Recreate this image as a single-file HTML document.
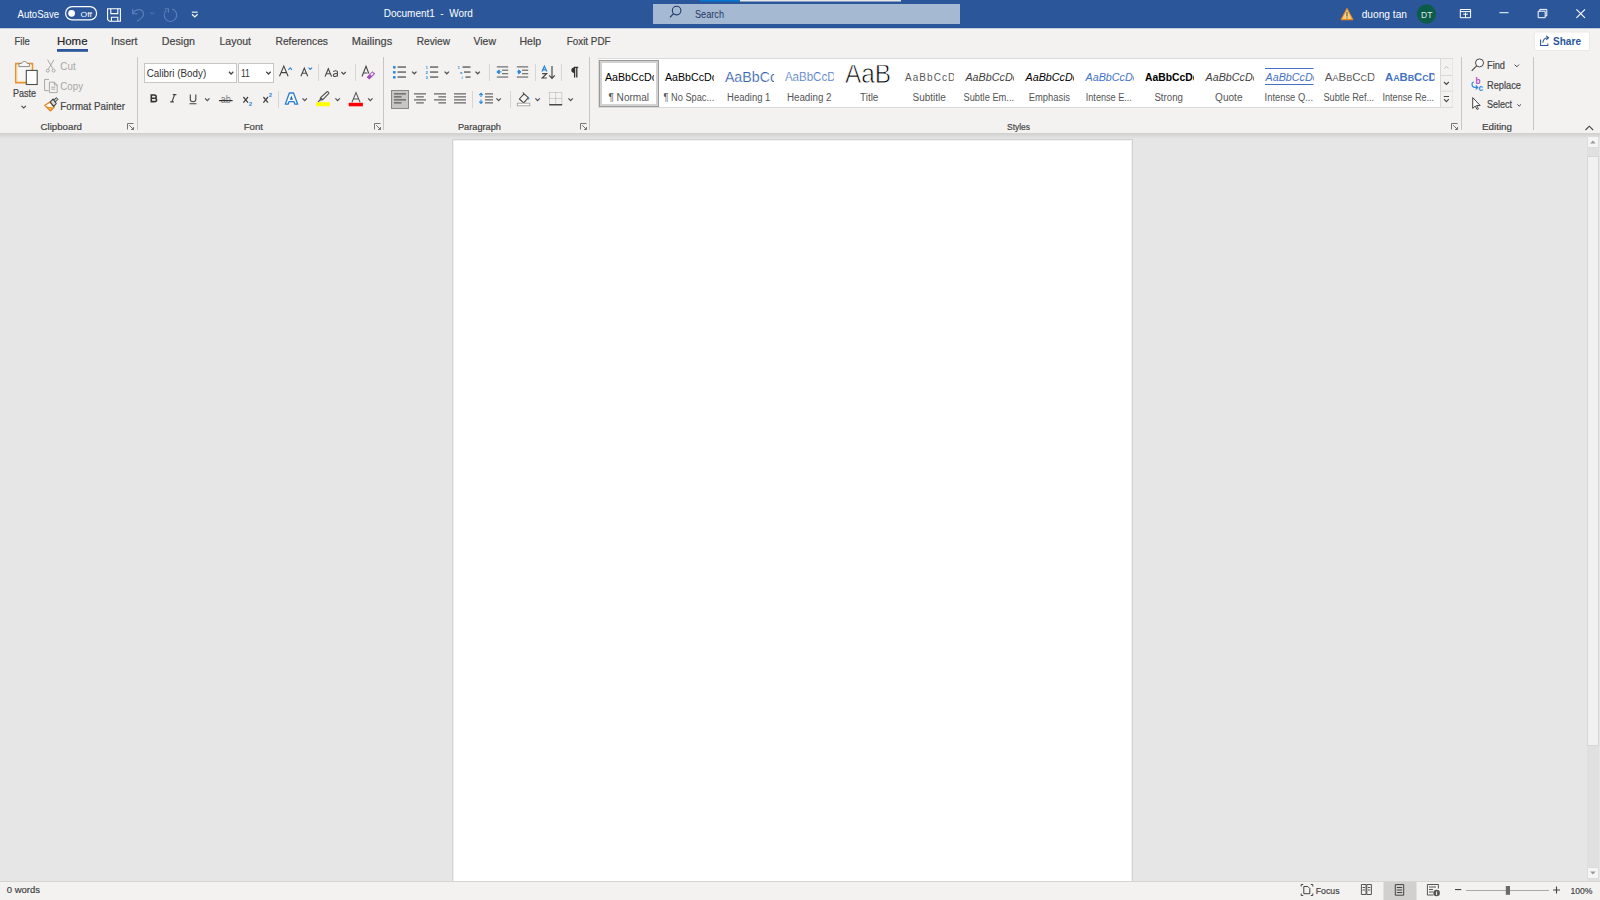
<!DOCTYPE html>
<html><head><meta charset="utf-8">
<style>
*{margin:0;padding:0}
html,body{width:1600px;height:900px;overflow:hidden;background:#e6e6e6}
svg{position:absolute;left:0;top:0}
text{font-family:"Liberation Sans",sans-serif;white-space:pre}
</style></head><body>
<svg width="1600" height="900" viewBox="0 0 1600 900">

<rect x="0" y="0" width="1600" height="28" fill="#2b579a"/>
<rect x="0" y="27" width="1600" height="1" fill="#25519a"/>
<rect x="700" y="0" width="40" height="1.5" fill="#0078d4"/>
<rect x="740" y="0" width="161" height="1.5" fill="#e6e6e6"/>
<rect x="653" y="4" width="307" height="20" fill="#a6b9d3"/>
<rect x="0" y="28" width="1600" height="105" fill="#f3f2f1"/>
<defs><linearGradient id="sh" x1="0" y1="0" x2="0" y2="1"><stop offset="0" stop-color="#d0cfce"/><stop offset="1" stop-color="#e6e6e6"/></linearGradient></defs>
<rect x="0" y="133" width="1600" height="6" fill="url(#sh)"/>
<rect x="452.5" y="139.5" width="680" height="745" fill="#fff" stroke="#d2d2d2" stroke-width="1"/>
<rect x="453.5" y="140.5" width="678" height="745" fill="none" stroke="#f0f0f0" stroke-width="1"/>
<rect x="0" y="881" width="1600" height="19" fill="#f3f2f1"/>
<rect x="0" y="881" width="1600" height="1" fill="#d6d5d4"/>

<!-- toggle -->
<rect x="65.6" y="6.6" width="31" height="13.3" rx="6.65" fill="none" stroke="#fff" stroke-width="1.2"/>
<circle cx="71.6" cy="13.3" r="3.4" fill="#fff"/>
<!-- save -->
<path d="M107.6 8.7h12.8v12.6h-11l-1.8-1.8z" fill="none" stroke="#fff" stroke-width="1.1"/>
<path d="M110.8 8.7v4.9h7v-4.9 M111.4 21.3v-4h6.4v4" fill="none" stroke="#fff" stroke-width="1.1"/>
<!-- undo -->
<path d="M133 13.5 C135 9 141.5 8 143.3 12.5 C144.5 15.5 141 19 137 21.2" fill="none" stroke="#5c80b8" stroke-width="1.1"/>
<path d="M132.6 8.8v4.9h4.9" fill="none" stroke="#5c80b8" stroke-width="1.1"/>
<path d="M150.2 12.2l2 2l2-2" fill="none" stroke="#5c80b8" stroke-width="0.9"/>
<!-- redo -->
<path d="M166.3 10.4 A6.3 6.3 0 1 0 172 9" fill="none" stroke="#5c80b8" stroke-width="1.1"/>
<path d="M164.8 8.8h3.6v3.6" fill="none" stroke="#5c80b8" stroke-width="1.1"/>
<!-- customize -->
<rect x="191.8" y="11.6" width="5.8" height="1.1" fill="#fff"/>
<path d="M192 14.3l2.8 2.6l2.8-2.6" fill="none" stroke="#fff" stroke-width="1.2"/>
<!-- search icon -->
<circle cx="676.6" cy="10.6" r="4.3" fill="none" stroke="#1f3763" stroke-width="1.1"/>
<path d="M673.5 13.7L670 17.3" stroke="#1f3763" stroke-width="1.2"/>
<!-- warning -->
<defs><linearGradient id="wg" x1="0" y1="0" x2="0" y2="1"><stop offset="0" stop-color="#fbe3a6"/><stop offset="1" stop-color="#f4c870"/></linearGradient></defs>
<path d="M1347 8.4L1352.8 19.6H1341.2z" fill="url(#wg)" stroke="#e8861a" stroke-width="1.1" stroke-linejoin="round"/>
<path d="M1347 11.8v4.6" stroke="#6a5a40" stroke-width="1.2"/>
<circle cx="1347" cy="17.9" r="0.6" fill="#6a5a40"/>
<!-- avatar -->
<circle cx="1426.5" cy="14" r="9.7" fill="#0c5c4a"/>
<!-- ribbon display -->
<path d="M1460.3 9.5h10.3v8.2h-10.3z M1460.3 11.6h10.3 M1465.5 12.6v4.6 M1463.2 14.2h4.6" fill="none" stroke="#fff" stroke-width="1"/>
<!-- minimize -->
<rect x="1499.5" y="12.2" width="9" height="1" fill="#fff"/>
<!-- restore -->
<path d="M1538.2 11.2h7v6.5h-7z M1539.8 11.2v-1.8h7v6.5h-1.6" fill="none" stroke="#fff" stroke-width="1"/>
<!-- close -->
<path d="M1576.4 9.4l8.6 8.4 M1585 9.4l-8.6 8.4" fill="none" stroke="#fff" stroke-width="1.1"/>

<!-- tab row top line -->
<rect x="0" y="28" width="1600" height="1" fill="#c6cfdc"/>
<!-- Home underline -->
<rect x="57" y="49" width="31" height="2.8" fill="#2b579a"/>
<!-- share btn -->
<rect x="1534.5" y="32" width="55" height="18.5" fill="#fff" stroke="#e6e4e2" stroke-width="0.8" rx="1.5"/>
<path d="M1540.6 39.5v5.9h7.2v-2 M1542.8 42.6c0.3-3 2.5-4.8 5.8-4.8 M1546.2 35.8l2.4 2l-2.4 2.1" fill="none" stroke="#2b579a" stroke-width="1.05"/>

<!-- ============ RIBBON ICONS ============ -->
<!-- group separators -->
<rect x="137" y="57" width="1" height="73" fill="#c8c6c4"/>
<rect x="383" y="57" width="1" height="73" fill="#c8c6c4"/>
<rect x="589" y="57" width="1" height="73" fill="#c8c6c4"/>
<rect x="1461" y="57" width="1" height="73" fill="#c8c6c4"/>
<rect x="1533" y="57" width="1" height="73" fill="#c8c6c4"/>

<!-- paste -->
<defs><linearGradient id="pg" x1="0" y1="0" x2="1" y2="0"><stop offset="0" stop-color="#fff6d8"/><stop offset="1" stop-color="#f6f6f6"/></linearGradient></defs>
<path d="M15.8 63.6h16.6v19h-16.6z" fill="#f7f7f7" stroke="#e8912d" stroke-width="1.6"/>
<path d="M17.1 64.9h14v16.4h-14z" fill="none" stroke="#fbe2a4" stroke-width="1"/>
<path d="M18.9 66.6v-3.2h2.8c0.6-2.6 4.8-2.6 5.4 0h2.3v3.2z" fill="#f6f6f6" stroke="#8a8a8a" stroke-width="1"/>
<rect x="26.3" y="70.4" width="10.9" height="14.1" fill="#fff" stroke="#4d4d4d" stroke-width="1.1"/>
<path d="M21.5 105.9l2.2 2.1l2.2-2.1" fill="none" stroke="#505050" stroke-width="1.25"/>
<!-- cut -->
<path d="M47.6 59.8l5.4 9 M53.9 59.8l-5.4 9" fill="none" stroke="#a8a8a8" stroke-width="1"/>
<circle cx="47.8" cy="70.6" r="1.5" fill="none" stroke="#a8a8a8" stroke-width="1"/>
<circle cx="53.6" cy="70.6" r="1.5" fill="none" stroke="#a8a8a8" stroke-width="1"/>
<!-- copy -->
<path d="M49 79.4h-4.4v11.2h4" fill="none" stroke="#a8a8a8" stroke-width="1"/>
<path d="M49.4 82.2h5l2.8 2.8v7.6h-7.8z M54.4 82.2v2.8h2.8 M51.4 87.2h3.8 M51.4 89.2h3.8" fill="none" stroke="#a8a8a8" stroke-width="1"/>
<!-- format painter -->
<path d="M44.8 105.2L50 102.1L54.2 107.2L50.2 110.9z" fill="#fff" stroke="#e8821e" stroke-width="1.3" stroke-linejoin="round"/>
<path d="M46 106.4L53.3 107.6L50.3 110.2z" fill="#ec8a22"/>
<circle cx="50.2" cy="108.6" r="1" fill="#f6c860"/>
<path d="M50.2 101.8L53.2 99L56.2 103.6L53.6 106.4z" fill="#dedede" stroke="#444" stroke-width="1.1" stroke-linejoin="round"/>
<path d="M53.8 100L56.4 97.6L57.9 99.4L55.4 102z" fill="#bbb" stroke="#444" stroke-width="1" stroke-linejoin="round"/>
<!-- font combo boxes -->
<rect x="144.5" y="63.5" width="92" height="19" fill="#fff" stroke="#c8c6c4" stroke-width="1"/>
<rect x="238.5" y="63.5" width="35" height="19" fill="#fff" stroke="#c8c6c4" stroke-width="1"/>
<path d="M228.9 71.8l2.2 2.2l2.2-2.2 M266.3 71.8l2.2 2.2l2.2-2.2" fill="none" stroke="#444" stroke-width="1.25"/>
<!-- grow / shrink font -->
<path d="M279.5 76.3l4.3-10.2l4.3 10.2 M281.2 72.6h5.2" fill="none" stroke="#444" stroke-width="1.1"/>
<path d="M288.4 69.8l1.8-2l1.8 2" fill="none" stroke="#2b88d8" stroke-width="1.1"/>
<path d="M300.9 76.3l3.4-8.2l3.4 8.2 M302.2 73.3h4.2" fill="none" stroke="#444" stroke-width="1.1"/>
<path d="M308.5 67.6l1.8 1.8l1.8-1.8" fill="none" stroke="#2b88d8" stroke-width="1.1"/>
<rect x="318" y="64" width="1" height="17" fill="#d8d6d4"/>
<!-- change case Aa -->
<path d="M325 76.6l3.3-7.9l3.3 7.9 M326.2 73.8h4.2" fill="none" stroke="#444" stroke-width="1.1"/>
<path d="M337.6 71.8c-0.4-1.5-3.8-1.5-4.2 0 M337.4 71.3v5.3 M337.4 73.8c-1.9-0.6-4.1 0-4.1 1.5c0 1.7 3.2 1.5 4.1 0" fill="none" stroke="#444" stroke-width="1.05"/>
<path d="M341.4 72l2.2 2.2l2.2-2.2" fill="none" stroke="#505050" stroke-width="1.25"/>
<rect x="355" y="64" width="1" height="17" fill="#d8d6d4"/>
<!-- clear formatting -->
<path d="M362 76.5l4-10.3l2.9 7.4" fill="none" stroke="#444" stroke-width="1.1"/>
<path d="M363.5 73h4" fill="none" stroke="#444" stroke-width="1"/>
<path d="M366.6 77.2L372.4 71.2L375.2 73.8L369.4 79.6z" fill="#a64dbf"/>
<path d="M370.4 74.6L372.4 72.6L373.6 73.8L371.6 75.8z" fill="#fff"/>


<!-- bold italic underline ... -->
<path d="M151.3 95h3c2.5 0 2.5 3.1 0.3 3.2c2.7 0 2.7 3.4-0.2 3.4h-3.1z M151.3 98.2h3.2" fill="none" stroke="#333" stroke-width="1.6"/>
<path d="M172.8 94.6h3.6 M170.2 101.9h3.6 M174.6 94.6l-2.6 7.3" fill="none" stroke="#444" stroke-width="1.15"/>
<path d="M190.3 94.5v4.8c0 3.3 5.5 3.3 5.5 0v-4.8 M189.5 103.7h7" fill="none" stroke="#444" stroke-width="1.1"/>
<path d="M205.1 98.4l2.2 2.2l2.2-2.2" fill="none" stroke="#505050" stroke-width="1.25"/>

<text x="220.7" y="103.3" font-size="10.8" fill="#7a7a7a" font-family="Liberation Sans" textLength="10" lengthAdjust="spacingAndGlyphs">ab</text>
<path d="M243.4 97l4.6 5.6 M248 97l-4.6 5.6" fill="none" stroke="#444" stroke-width="1.25"/>
<text x="248.7" y="105.8" font-size="6" fill="#2b88d8" font-family="Liberation Sans" font-weight="bold">2</text>
<path d="M263.4 97l4.6 5.6 M268 97l-4.6 5.6" fill="none" stroke="#444" stroke-width="1.25"/>
<text x="268.7" y="96.6" font-size="6" fill="#2b88d8" font-family="Liberation Sans" font-weight="bold">2</text>
<rect x="278" y="91" width="1" height="17" fill="#d8d6d4"/>
<path d="M219 100.6h13.6" stroke="#333" stroke-width="1.2"/>
<!-- text effects -->
<path d="M289.3 93h4.2l4.2 11.2h-2.8l-0.9-2.6h-5l-0.9 2.6h-2.8z" fill="#f4f8fc" stroke="#2b7cd3" stroke-width="1.3" stroke-linejoin="round"/>
<path d="M289.9 99.8h3l-1.5-4.2z" fill="#1f5fa8"/>
<path d="M302.5 98.4l2.2 2.2l2.2-2.2" fill="none" stroke="#505050" stroke-width="1.25"/>
<!-- highlighter -->
<path d="M320 100.2l0.6-2.6l6.2-5.6c0.9-0.8 2.6 0.6 1.8 1.6l-5.8 6z M320.6 97.6l2.2 2 M320 100.2l-2 1.6" fill="#f6f6f6" stroke="#555" stroke-width="1.2" stroke-linejoin="round"/>
<rect x="316.2" y="102.2" width="13.8" height="4" fill="#ffff00"/>
<path d="M335.4 98.4l2.2 2.2l2.2-2.2" fill="none" stroke="#505050" stroke-width="1.25"/>
<!-- font color -->
<path d="M351.9 102.4l4.1-9.8l4.1 9.8 M353.4 99h5.2" fill="none" stroke="#555" stroke-width="1.05"/>
<rect x="348.7" y="102.8" width="14.2" height="3.5" fill="#ff0000"/>
<path d="M368.1 98.4l2.2 2.2l2.2-2.2" fill="none" stroke="#505050" stroke-width="1.25"/>
<!-- dialog launchers -->
<g fill="none" stroke="#666" stroke-width="0.9">
<path d="M127.5 129.5v-6h6 M129.2 125.2l4.3 4.3 M133.5 127v2.5h-2.5"/>
<path d="M374.5 129.5v-6h6 M376.2 125.2l4.3 4.3 M380.5 127v2.5h-2.5"/>
<path d="M580.5 129.5v-6h6 M582.2 125.2l4.3 4.3 M586.5 127v2.5h-2.5"/>
<path d="M1451.5 129.5v-6h6 M1453.2 125.2l4.3 4.3 M1457.5 127v2.5h-2.5"/>
</g>

<!-- bullets -->
<g fill="#2b88d8">
<rect x="393" y="66.1" width="2.6" height="2.4"/><rect x="393" y="71.1" width="2.6" height="2.4"/><rect x="393" y="76.1" width="2.6" height="2.4"/>
</g>
<g fill="#555"><rect x="397.5" y="66.4" width="8.5" height="1.3"/><rect x="397.5" y="71.4" width="8.5" height="1.3"/><rect x="397.5" y="76.4" width="8.5" height="1.3"/></g>
<path d="M412.1 71.6l2.2 2.2l2.2-2.2" fill="none" stroke="#505050" stroke-width="1.3"/>
<g font-family="Liberation Sans" font-size="4.2" fill="#2b88d8" font-weight="bold"><text x="425.5" y="69.2">1</text><text x="425.5" y="74.2">2</text><text x="425.5" y="79.2">3</text></g>
<g fill="#555"><rect x="430" y="66.4" width="8.2" height="1.3"/><rect x="430" y="71.4" width="8.2" height="1.3"/><rect x="430" y="76.4" width="8.2" height="1.3"/></g>
<path d="M444.6 71.6l2.2 2.2l2.2-2.2" fill="none" stroke="#505050" stroke-width="1.3"/>
<g font-family="Liberation Sans" font-size="4.2" fill="#2b88d8" font-weight="bold"><text x="457.6" y="69.2">1</text><text x="460" y="74.2">a</text><text x="461.4" y="79.2">i</text></g>
<g fill="#555"><rect x="462.5" y="66.4" width="8" height="1.3"/><rect x="464" y="71.4" width="6.5" height="1.3"/><rect x="465.5" y="76.4" width="5" height="1.3"/></g>
<path d="M475.5 71.6l2.2 2.2l2.2-2.2" fill="none" stroke="#505050" stroke-width="1.3"/>
<rect x="489" y="64" width="1" height="17" fill="#d8d6d4"/>
<!-- indents -->
<g fill="#777"><rect x="496.8" y="66.2" width="11.4" height="1.3"/><rect x="496.8" y="76.4" width="11.4" height="1.3"/><rect x="502" y="69.6" width="6.2" height="1.3"/><rect x="502" y="73" width="6.2" height="1.3"/></g>
<path d="M496.8 71.9l2.4-2v4z M499 71.9h2.6" fill="#2b88d8" stroke="#2b88d8" stroke-width="1"/>
<g fill="#777"><rect x="516.8" y="66.2" width="11.4" height="1.3"/><rect x="516.8" y="76.4" width="11.4" height="1.3"/><rect x="522" y="69.6" width="6.2" height="1.3"/><rect x="522" y="73" width="6.2" height="1.3"/></g>
<path d="M521 71.9l-2.4-2v4z M516.8 71.9h2.6" fill="#2b88d8" stroke="#2b88d8" stroke-width="1"/>
<rect x="535" y="64" width="1" height="17" fill="#d8d6d4"/>
<!-- sort -->
<path d="M542 71.6l2.4-5.4l2.4 5.4 M542.9 69.8h3" fill="none" stroke="#2b88d8" stroke-width="1.25"/>
<path d="M542.2 73.6h4.4l-4.4 4.4h4.6" fill="none" stroke="#444" stroke-width="1.2"/>
<path d="M552 66v12.3 M549.2 75.3l2.8 3l2.8-3" fill="none" stroke="#444" stroke-width="1.15"/>
<rect x="561" y="64" width="1" height="17" fill="#d8d6d4"/>
<!-- pilcrow -->
<path d="M574 67.4h4.2 M574.6 67.4v10.2 M576.8 67.4v10.2" fill="none" stroke="#333" stroke-width="1.3"/>
<path d="M574.6 67.2c-4.4 0-4.4 5.8 0 5.8z" fill="#333"/>
<!-- align -->
<rect x="391.5" y="90.5" width="17" height="18" fill="#c8c6c4" stroke="#8a8886" stroke-width="1"/>
<g fill="#444">
<rect x="394" y="93.4" width="12" height="1"/><rect x="394" y="96.4" width="7.5" height="1"/><rect x="394" y="99.4" width="12" height="1"/><rect x="394" y="102.4" width="7.5" height="1"/>
<rect x="414" y="93.4" width="12" height="1"/><rect x="416.2" y="96.4" width="7.6" height="1"/><rect x="414" y="99.4" width="12" height="1"/><rect x="416.2" y="102.4" width="7.6" height="1"/>
<rect x="434" y="93.4" width="12" height="1"/><rect x="438.4" y="96.4" width="7.6" height="1"/><rect x="434" y="99.4" width="12" height="1"/><rect x="438.4" y="102.4" width="7.6" height="1"/>
<rect x="454" y="93.4" width="12" height="1"/><rect x="454" y="96.4" width="12" height="1"/><rect x="454" y="99.4" width="12" height="1"/><rect x="454" y="102.4" width="12" height="1"/>
</g>
<rect x="472" y="91" width="1" height="17" fill="#d8d6d4"/>
<!-- line spacing -->
<path d="M481 93.4v3.6 M481 99.6v3.8 M479.2 95.2l1.8-1.8l1.8 1.8 M479.2 101.6l1.8 1.8l1.8-1.8" fill="none" stroke="#2b88d8" stroke-width="1.1"/>
<g fill="#444"><rect x="485" y="93.4" width="8" height="1"/><rect x="485" y="96.4" width="8" height="1"/><rect x="485" y="99.4" width="8" height="1"/><rect x="485" y="102.4" width="8" height="1"/></g>
<path d="M496.4 98.4l2.2 2.2l2.2-2.2" fill="none" stroke="#505050" stroke-width="1.25"/>
<rect x="510" y="91" width="1" height="17" fill="#d8d6d4"/>
<!-- shading -->
<path d="M519.4 99l4.6-5.2l4.3 3.8l-4.6 5.2z" fill="#f8f8f8" stroke="#444" stroke-width="1.1" stroke-linejoin="round"/>
<path d="M523 92.2l1.2 2.4" stroke="#444" stroke-width="1"/>
<path d="M528.2 96.4c1.2 1 1.6 2.6 0.8 3.2c-0.8 0.4-1.2-1-0.8-3.2z" fill="#2b88d8"/>
<rect x="517.3" y="103.2" width="12.5" height="2.6" fill="#fff" stroke="#a0a0a0" stroke-width="0.9"/>
<path d="M535.4 98.4l2.2 2.2l2.2-2.2" fill="none" stroke="#505050" stroke-width="1.25"/>
<!-- borders -->
<path d="M549.5 92.5h12.4 M549.5 92.5v12 M561.9 92.5v12 M555.7 92.5v12 M549.5 98.5h12.4" fill="none" stroke="#9a9a9a" stroke-width="0.8" stroke-dasharray="1 1"/>
<rect x="549.2" y="104.2" width="13" height="1.2" fill="#222"/>
<path d="M568.4 98.4l2.2 2.2l2.2-2.2" fill="none" stroke="#505050" stroke-width="1.25"/>

<!-- styles gallery -->
<rect x="598.5" y="58.5" width="854" height="49" fill="#fff" stroke="#dadada" stroke-width="1"/>
<rect x="601" y="62" width="56" height="43" fill="none" stroke="#d2d2d2" stroke-width="2"/>
<rect x="599.5" y="60.5" width="59" height="46" fill="none" stroke="#9a9a9a" stroke-width="1"/>
<rect x="1440" y="59" width="12.5" height="48" fill="#f3f2f1"/>
<path d="M1440.5 59v48 M1440.5 75.5h12 M1440.5 91.2h12" stroke="#d8d8d8" stroke-width="1"/>
<path d="M1444.2 68.5l2.2-2l2.2 2" fill="none" stroke="#c0c0c0" stroke-width="1"/>
<path d="M1444 82l2.4 2.4l2.4-2.4" fill="none" stroke="#444" stroke-width="1.1"/>
<path d="M1443.8 96.5h5.2 M1444 99.2l2.4 2.4l2.4-2.4" fill="none" stroke="#444" stroke-width="1.1"/>
<!-- intense quote lines -->
<rect x="1265" y="68" width="48.5" height="1" fill="#4472c4"/>
<rect x="1265" y="84" width="48.5" height="1" fill="#4472c4"/>

<!-- editing -->
<circle cx="1479.5" cy="62.9" r="4" fill="#fafafa" stroke="#444" stroke-width="1"/>
<path d="M1476.6 65.9l-4.9 4.9" stroke="#444" stroke-width="1.1"/>
<path d="M1514.6 64.6l2.2 2.2l2.2-2.2" fill="none" stroke="#444" stroke-width="1"/>
<text x="1475.6" y="83.5" font-size="8.2" fill="#b146c2" font-family="Liberation Sans" font-weight="bold">b</text>
<text x="1478.6" y="90.9" font-size="8.2" fill="#2b88d8" font-family="Liberation Sans" font-weight="bold">c</text>
<path d="M1473.6 81.8c-2.4 1.4-2.2 5 0.8 5.6h2.4 M1475.8 85.4l2 2l-2 2" fill="none" stroke="#2b88d8" stroke-width="1.2"/>
<path d="M1472.7 97.6v10.8l2.5-2.3l1.9 3.4l1.3-0.7l-1.8-3.3h3.6z" fill="#fff" stroke="#444" stroke-width="1" stroke-linejoin="round"/>
<path d="M1517.4 104.4l1.8 1.8l1.8-1.8" fill="none" stroke="#444" stroke-width="1"/>
<path d="M1585.5 130l3.8-3.8l3.8 3.8" fill="none" stroke="#444" stroke-width="1.1"/>

<!-- scrollbar -->
<rect x="1587" y="139" width="12" height="742" fill="#e0e0e0"/>
<rect x="1587.5" y="136.5" width="11" height="11" fill="#f5f5f5" stroke="#dcdcdc" stroke-width="1"/>
<path d="M1590.1 143.5l2.8-3l2.8 3z" fill="#9a9a9a"/>
<rect x="1587.5" y="156.5" width="11" height="589" fill="#f1f1f1" stroke="#d6d6d6" stroke-width="1"/>
<rect x="1587.5" y="867.5" width="11" height="11" fill="#f5f5f5" stroke="#dcdcdc" stroke-width="1"/>
<path d="M1590.1 871.4l2.8 3l2.8-3z" fill="#9a9a9a"/>

<!-- status bar icons -->
<path d="M1301.2 886.5v-2h2 M1310.8 884.5h2v2 M1312.8 893.5v2h-2 M1303.2 895.5h-2v-2" fill="none" stroke="#444" stroke-width="1"/>
<path d="M1303.8 886.5h4l2 2v5.2h-6z" fill="none" stroke="#444" stroke-width="1"/>
<path d="M1361.4 884.5h4.6v10h-4.6z M1366.8 884.5h4.6v10h-4.6z M1362.5 887.5h2.5 M1362.5 890h2.5 M1367.8 887.5h2.5 M1367.8 890h2.5" fill="none" stroke="#555" stroke-width="1"/>
<rect x="1383.5" y="882" width="33" height="18" fill="#d2d0ce"/>
<path d="M1395.3 884.6h8.4v10.6h-8.4z M1396.8 887.5h5.4 M1396.8 890h5.4 M1396.8 892.5h5.4" fill="none" stroke="#444" stroke-width="1"/>
<path d="M1427.4 884.5h11v4 M1427.4 884.5v10.5h6 M1429 887h7 M1429 889.5h4 M1429 892h4" fill="none" stroke="#555" stroke-width="1"/>
<circle cx="1436.6" cy="893" r="3.3" fill="#555"/>
<path d="M1436.6 891.5v3.5" stroke="#f3f2f1" stroke-width="1"/>
<rect x="1455" y="889" width="6.2" height="1.1" fill="#444"/>
<rect x="1466" y="890" width="83" height="1" fill="#a8a8a8"/>
<rect x="1505.8" y="886" width="4.2" height="8.8" fill="#6a6a6a"/>
<path d="M1553 890h7 M1556.5 886.5v7" fill="none" stroke="#444" stroke-width="1.1"/>

<text x="17.50" y="18" font-size="11" fill="#fff" textLength="41.50" lengthAdjust="spacingAndGlyphs">AutoSave</text>
<text x="80.60" y="17" font-size="7.5" fill="#fff" textLength="11.28" lengthAdjust="spacingAndGlyphs">Off</text>
<text x="383.80" y="17" font-size="10.8" fill="#fff" textLength="89.10" lengthAdjust="spacingAndGlyphs" xml:space="preserve">Document1  -  Word</text>
<text x="695.00" y="18" font-size="10.5" fill="#1f3763" textLength="29.00" lengthAdjust="spacingAndGlyphs">Search</text>
<text x="1361.70" y="18.2" font-size="10.8" fill="#fff" textLength="45.30" lengthAdjust="spacingAndGlyphs">duong tan</text>
<text x="1421.00" y="17.8" font-size="9.6" fill="#dfe7e4" textLength="11.40" lengthAdjust="spacingAndGlyphs">DT</text>
<text x="14.50" y="45" font-size="11" fill="#444" textLength="15.30" lengthAdjust="spacingAndGlyphs" stroke="#444" stroke-width="0.2">File</text>
<text x="57.00" y="45" font-size="11" fill="#262626" textLength="30.49" lengthAdjust="spacingAndGlyphs" stroke="#262626" stroke-width="0.2">Home</text>
<text x="111.00" y="45" font-size="11" fill="#444" textLength="26.50" lengthAdjust="spacingAndGlyphs" stroke="#444" stroke-width="0.2">Insert</text>
<text x="161.80" y="45" font-size="11" fill="#444" textLength="33.20" lengthAdjust="spacingAndGlyphs" stroke="#444" stroke-width="0.2">Design</text>
<text x="219.50" y="45" font-size="11" fill="#444" textLength="31.50" lengthAdjust="spacingAndGlyphs" stroke="#444" stroke-width="0.2">Layout</text>
<text x="275.50" y="45" font-size="11" fill="#444" textLength="52.50" lengthAdjust="spacingAndGlyphs" stroke="#444" stroke-width="0.2">References</text>
<text x="351.80" y="45" font-size="11" fill="#444" stroke="#444" stroke-width="0.2">Mailings</text>
<text x="416.80" y="45" font-size="11" fill="#444" textLength="33.17" lengthAdjust="spacingAndGlyphs" stroke="#444" stroke-width="0.2">Review</text>
<text x="473.50" y="45" font-size="11" fill="#444" textLength="22.47" lengthAdjust="spacingAndGlyphs" stroke="#444" stroke-width="0.2">View</text>
<text x="519.50" y="45" font-size="11" fill="#444" textLength="21.70" lengthAdjust="spacingAndGlyphs" stroke="#444" stroke-width="0.2">Help</text>
<text x="566.80" y="45" font-size="11" fill="#444" textLength="43.70" lengthAdjust="spacingAndGlyphs" stroke="#444" stroke-width="0.2">Foxit PDF</text>
<text x="1553.00" y="45" font-size="11.5" fill="#2b579a" font-weight="bold" textLength="28.00" lengthAdjust="spacingAndGlyphs">Share</text>
<text x="12.90" y="97.4" font-size="10.2" fill="#444" textLength="23.00" lengthAdjust="spacingAndGlyphs" stroke="#444" stroke-width="0.2">Paste</text>
<text x="60.30" y="69.9" font-size="10.5" fill="#a6a6a6" textLength="15.40" lengthAdjust="spacingAndGlyphs">Cut</text>
<text x="60.30" y="89.7" font-size="10.5" fill="#a6a6a6" textLength="22.70" lengthAdjust="spacingAndGlyphs">Copy</text>
<text x="60.30" y="109.7" font-size="10.5" fill="#444" textLength="64.70" lengthAdjust="spacingAndGlyphs" stroke="#444" stroke-width="0.2">Format Painter</text>
<text x="40.50" y="130" font-size="9.8" fill="#444" textLength="41.50" lengthAdjust="spacingAndGlyphs" stroke="#444" stroke-width="0.2">Clipboard</text>
<text x="146.70" y="77" font-size="10.5" fill="#333" textLength="59.50" lengthAdjust="spacingAndGlyphs">Calibri (Body)</text>
<text x="240.90" y="77" font-size="10.5" fill="#333" textLength="8.90" lengthAdjust="spacingAndGlyphs">11</text>
<text x="243.70" y="129.5" font-size="9.8" fill="#444" textLength="19.30" lengthAdjust="spacingAndGlyphs" stroke="#444" stroke-width="0.2">Font</text>
<text x="457.90" y="130" font-size="9.8" fill="#444" textLength="43.10" lengthAdjust="spacingAndGlyphs" stroke="#444" stroke-width="0.2">Paragraph</text>
<text x="1007.00" y="130" font-size="9.8" fill="#444" textLength="23.00" lengthAdjust="spacingAndGlyphs" stroke="#444" stroke-width="0.2">Styles</text>
<text x="1482.00" y="130" font-size="9.8" fill="#444" stroke="#444" stroke-width="0.2">Editing</text>
<text x="1487.00" y="69" font-size="10.5" fill="#444" textLength="18.00" lengthAdjust="spacingAndGlyphs" stroke="#444" stroke-width="0.2">Find</text>
<text x="1487.00" y="88.5" font-size="10.5" fill="#444" textLength="34.00" lengthAdjust="spacingAndGlyphs" stroke="#444" stroke-width="0.2">Replace</text>
<text x="1487.00" y="107.5" font-size="10.5" fill="#444" textLength="25.00" lengthAdjust="spacingAndGlyphs" stroke="#444" stroke-width="0.2">Select</text>
<text x="608.40" y="100.6" font-size="10" fill="#555" textLength="40.70" lengthAdjust="spacingAndGlyphs">¶ Normal</text>
<text x="663.50" y="100.6" font-size="10" fill="#555" textLength="50.70" lengthAdjust="spacingAndGlyphs">¶ No Spac...</text>
<text x="727.10" y="100.6" font-size="10" fill="#555" textLength="43.30" lengthAdjust="spacingAndGlyphs">Heading 1</text>
<text x="786.90" y="100.6" font-size="10" fill="#555" textLength="44.60" lengthAdjust="spacingAndGlyphs">Heading 2</text>
<text x="860.00" y="100.6" font-size="10" fill="#555" textLength="18.40" lengthAdjust="spacingAndGlyphs">Title</text>
<text x="912.50" y="100.6" font-size="10" fill="#555">Subtitle</text>
<text x="963.50" y="100.6" font-size="10" fill="#555" textLength="50.60" lengthAdjust="spacingAndGlyphs">Subtle Em...</text>
<text x="1028.80" y="100.6" font-size="10" fill="#555" textLength="41.20" lengthAdjust="spacingAndGlyphs">Emphasis</text>
<text x="1085.75" y="100.6" font-size="10" fill="#555" textLength="46.15" lengthAdjust="spacingAndGlyphs">Intense E...</text>
<text x="1154.40" y="100.6" font-size="10" fill="#555" textLength="28.50" lengthAdjust="spacingAndGlyphs">Strong</text>
<text x="1215.10" y="100.6" font-size="10" fill="#555" textLength="27.40" lengthAdjust="spacingAndGlyphs">Quote</text>
<text x="1264.60" y="100.6" font-size="10" fill="#555" textLength="48.40" lengthAdjust="spacingAndGlyphs">Intense Q...</text>
<text x="1323.40" y="100.6" font-size="10" fill="#555" textLength="50.80" lengthAdjust="spacingAndGlyphs">Subtle Ref...</text>
<text x="1382.50" y="100.6" font-size="10" fill="#555" textLength="51.60" lengthAdjust="spacingAndGlyphs">Intense Re...</text>
<clipPath id="c46"><rect x="603" y="61" width="51" height="45"/></clipPath>
<text x="604.90" y="80.75" font-size="11" fill="#000" textLength="52.10" lengthAdjust="spacingAndGlyphs" clip-path="url(#c46)">AaBbCcDc</text>
<clipPath id="c48"><rect x="663" y="61" width="51" height="45"/></clipPath>
<text x="664.90" y="80.75" font-size="11" fill="#000" textLength="52.10" lengthAdjust="spacingAndGlyphs" clip-path="url(#c48)">AaBbCcDc</text>
<clipPath id="c50"><rect x="723" y="61" width="51" height="45"/></clipPath>
<text x="724.90" y="82.3" font-size="15.5" fill="#3560ac" textLength="52.11" lengthAdjust="spacingAndGlyphs" stroke="#fff" stroke-width="0.2" clip-path="url(#c50)">AaBbCc</text>
<clipPath id="c52"><rect x="783" y="61" width="51" height="45"/></clipPath>
<text x="784.90" y="80.75" font-size="12.8" fill="#4472c4" textLength="57.10" lengthAdjust="spacingAndGlyphs" stroke="#fff" stroke-width="0.2" clip-path="url(#c52)">AaBbCcDd</text>
<clipPath id="c54"><rect x="843" y="65.5" width="54" height="40.5"/></clipPath>
<text x="845.00" y="83.2" font-size="28.5" fill="#000" textLength="46.10" lengthAdjust="spacingAndGlyphs" stroke="#fff" stroke-width="0.8" clip-path="url(#c54)">AaB</text>
<clipPath id="c56"><rect x="903" y="61" width="51" height="45"/></clipPath>
<text x="904.90" y="80.75" font-size="10" fill="#595959" textLength="57.10" lengthAdjust="spacing" clip-path="url(#c56)">AaBbCcDd</text>
<clipPath id="c58"><rect x="963" y="61" width="51" height="45"/></clipPath>
<text x="965.44" y="80.75" font-size="11" fill="#404040" font-style="italic" textLength="53.27" lengthAdjust="spacingAndGlyphs" clip-path="url(#c58)">AaBbCcDd</text>
<clipPath id="c60"><rect x="1023" y="61" width="51" height="45"/></clipPath>
<text x="1025.54" y="80.75" font-size="11" fill="#000" font-style="italic" textLength="53.17" lengthAdjust="spacingAndGlyphs" clip-path="url(#c60)">AaBbCcDd</text>
<clipPath id="c62"><rect x="1083" y="61" width="51" height="45"/></clipPath>
<text x="1085.54" y="80.75" font-size="11" fill="#4472c4" font-style="italic" textLength="53.17" lengthAdjust="spacingAndGlyphs" clip-path="url(#c62)">AaBbCcDd</text>
<clipPath id="c64"><rect x="1143" y="61" width="51" height="45"/></clipPath>
<text x="1145.00" y="80.75" font-size="11" fill="#000" font-weight="bold" textLength="54.00" lengthAdjust="spacingAndGlyphs" clip-path="url(#c64)">AaBbCcDd</text>
<clipPath id="c66"><rect x="1203" y="61" width="51" height="45"/></clipPath>
<text x="1205.54" y="80.75" font-size="11" fill="#404040" font-style="italic" textLength="53.17" lengthAdjust="spacingAndGlyphs" clip-path="url(#c66)">AaBbCcDd</text>
<clipPath id="c68"><rect x="1263" y="61" width="51" height="45"/></clipPath>
<text x="1265.54" y="80.75" font-size="11" fill="#4472c4" font-style="italic" textLength="53.17" lengthAdjust="spacingAndGlyphs" clip-path="url(#c68)">AaBbCcDd</text>
<clipPath id="c70"><rect x="1323" y="61" width="51.5" height="45"/></clipPath>
<text x="1324.75" y="80.5" fill="#595959" textLength="57.25" lengthAdjust="spacingAndGlyphs" clip-path="url(#c70)"><tspan font-size="10.4">A</tspan><tspan font-size="8.2">A</tspan><tspan font-size="10.4">B</tspan><tspan font-size="8.2">B</tspan><tspan font-size="10.4">C</tspan><tspan font-size="8.2">C</tspan><tspan font-size="10.4">D</tspan><tspan font-size="8.2">D</tspan></text>
<clipPath id="c72"><rect x="1383" y="61" width="51.5" height="45"/></clipPath>
<text x="1385.10" y="80.5" fill="#4472c4" font-weight="bold" textLength="57.90" lengthAdjust="spacingAndGlyphs" clip-path="url(#c72)"><tspan font-size="10.4">A</tspan><tspan font-size="8.2">A</tspan><tspan font-size="10.4">B</tspan><tspan font-size="8.2">B</tspan><tspan font-size="10.4">C</tspan><tspan font-size="8.2">C</tspan><tspan font-size="10.4">D</tspan><tspan font-size="8.2">D</tspan></text>
<text x="6.75" y="893.25" font-size="9.8" fill="#444" textLength="33.25" lengthAdjust="spacingAndGlyphs" stroke="#444" stroke-width="0.2">0 words</text>
<text x="1315.80" y="894" font-size="9.8" fill="#444" textLength="23.70" lengthAdjust="spacingAndGlyphs" stroke="#444" stroke-width="0.2">Focus</text>
<text x="1570.50" y="894" font-size="9.8" fill="#444" textLength="22.00" lengthAdjust="spacingAndGlyphs" stroke="#444" stroke-width="0.2">100%</text>
</svg>
</body></html>
